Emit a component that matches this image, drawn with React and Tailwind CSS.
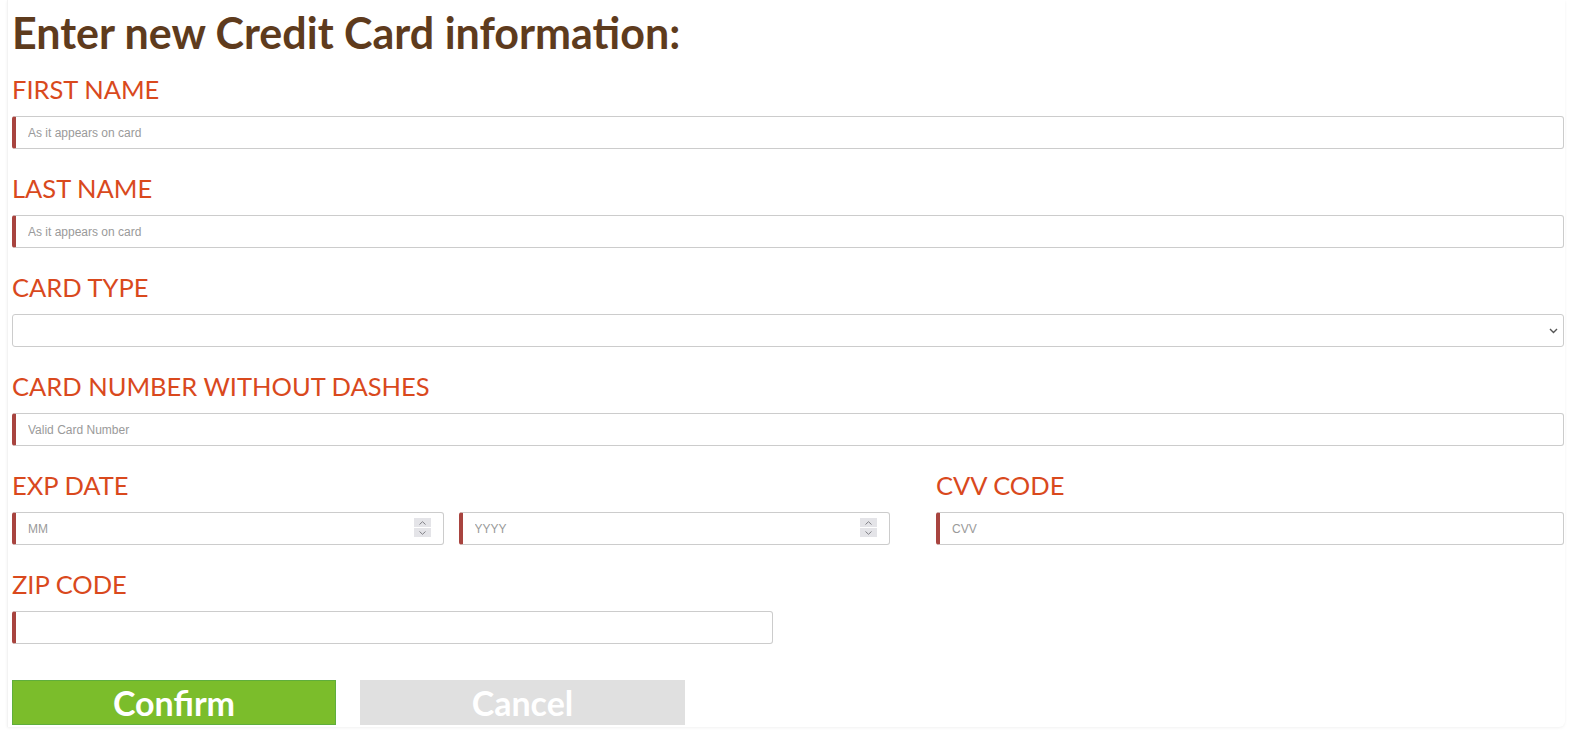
import React from 'react';

const labelCls =
  "block text-[25.5px] leading-[36px] uppercase text-[#d9491d] font-['Lato',sans-serif]";
const inputCls =
  "w-full h-[33px] border border-[#cccccc] border-l-4 border-l-[#a8443f] rounded-[3px] bg-white pl-[12px] text-[12px] text-[#555] placeholder:text-[#9a9a9a] font-['Liberation_Sans',Arial,sans-serif] outline-none";

function Spinner() {
  return (
    <span className="absolute right-[13px] top-[6px] flex flex-col gap-[1px]">
      <span className="w-[17px] h-[9px] bg-[#e4e4e8] flex items-center justify-center">
        <svg width="7" height="4" viewBox="0 0 7 4">
          <path d="M0.5 3.5 L3.5 0.7 L6.5 3.5" fill="none" stroke="#808086" strokeWidth="1" />
        </svg>
      </span>
      <span className="w-[17px] h-[9px] bg-[#e4e4e8] flex items-center justify-center">
        <svg width="7" height="4" viewBox="0 0 7 4">
          <path d="M0.5 0.5 L3.5 3.3 L6.5 0.5" fill="none" stroke="#808086" strokeWidth="1" />
        </svg>
      </span>
    </span>
  );
}

function Field({ label, placeholder }) {
  return (
    <div className="mb-[21px]">
      <label className={labelCls}>{label}</label>
      <input className={`${inputCls} mt-[9px]`} placeholder={placeholder} />
    </div>
  );
}

export default function App() {
  return (
    <div className="bg-white min-h-[750px]">
      <div className="ml-[7px] w-[1558px] pl-[4px] pr-[1px] pb-[2px] border-l border-[#f3f3f3] rounded-br-[6px] shadow-[0_1px_3px_rgba(0,0,0,0.06)]">
        <h1 className="pt-[8px] text-[43px] leading-[50px] font-bold text-[#5e3b1d] font-['Lato',sans-serif]">
          Enter new Credit Card information:
        </h1>
        <form className="mt-[13px]">
          <Field label="First Name" placeholder="As it appears on card" />
          <Field label="Last Name" placeholder="As it appears on card" />
          <div className="mb-[21px]">
            <label className={labelCls}>Card Type</label>
            <div className="relative mt-[9px]">
              <select className="w-full h-[33px] border border-[#cccccc] rounded-[3px] bg-white appearance-none outline-none" />
              <svg
                className="absolute right-[6px] top-[14px]"
                width="9"
                height="6"
                viewBox="0 0 9 6"
              >
                <path d="M1 1 L4.5 4.5 L8 1" fill="none" stroke="#555" strokeWidth="1.4" />
              </svg>
            </div>
          </div>
          <Field label="Card Number without dashes" placeholder="Valid Card Number" />
          <div className="flex gap-[46px] mb-[21px]">
            <div className="w-[878px]">
              <label className={labelCls}>Exp Date</label>
              <div className="flex gap-[15px] mt-[9px]">
                <div className="relative flex-1">
                  <input className={inputCls} placeholder="MM" />
                  <Spinner />
                </div>
                <div className="relative flex-1">
                  <input className={inputCls} placeholder="YYYY" />
                  <Spinner />
                </div>
              </div>
            </div>
            <div className="flex-1">
              <label className={labelCls}>CVV Code</label>
              <input className={`${inputCls} mt-[9px]`} placeholder="CVV" />
            </div>
          </div>
          <div>
            <label className={labelCls}>Zip Code</label>
            <input className={`${inputCls} mt-[9px] !w-[761px]`} />
          </div>
          <div className="flex gap-[24px] mt-[36px]">
            <button
              type="button"
              className="w-[324px] h-[45px] bg-[#7bbd2b] border border-[#5fae3c] text-white text-[34px] leading-[40px] font-bold font-['Lato',sans-serif]"
            >
              Confirm
            </button>
            <button
              type="button"
              className="w-[325px] h-[45px] bg-[#e0e0e0] text-white text-[34px] leading-[40px] font-bold font-['Lato',sans-serif]"
            >
              Cancel
            </button>
          </div>
        </form>
      </div>
    </div>
  );
}
